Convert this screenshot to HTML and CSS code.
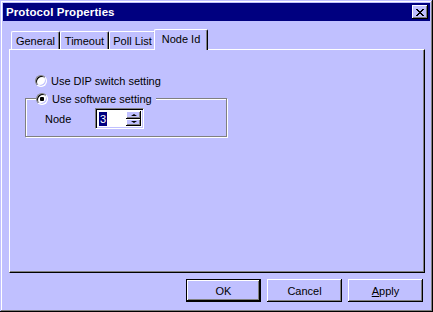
FILE: index.html
```html
<!DOCTYPE html>
<html lang="en">

<head>
  <meta charset="UTF-8">
  <title>Protocol Properties</title>
  <link rel="stylesheet" href="styles.css">
</head>

<body>
  <div class="window">
    <div class="titlebar">
      <span class="title">Protocol Properties</span>
      <button class="close" aria-label="Close">
        <svg width="8" height="7" viewBox="0 0 8 7">
          <path d="M0 0h2v1h1v1h2v-1h1v-1h2v1h-1v1h-1v1h-1v1h1v1h1v1h1v1h-2v-1h-1v-1h-2v1h-1v1h-2v-1h1v-1h1v-1h1v-1h-1v-1h-1v-1h-1z" fill="#000"/>
        </svg>
      </button>
    </div>

    <div class="body">
      <div class="tabs">
        <div class="tab tab-general">General</div>
        <div class="tab tab-timeout">Timeout</div>
        <div class="tab tab-poll">Poll List</div>
        <div class="tab active">Node Id</div>
      </div>

      <div class="panel">
        <label class="option">
          <span class="radio"></span>
          <span>Use DIP switch setting</span>
        </label>

        <fieldset class="group">
          <legend class="option">
            <span class="radio checked"></span>
            <span>Use software setting</span>
          </legend>
          <div class="node-row">
            <span class="node-label">Node</span>
            <div class="spin">
              <span class="spin-value"><span class="selected">3</span></span>
              <div class="spin-buttons">
                <span class="spin-btn"><i class="arrow up"></i></span>
                <span class="spin-btn"><i class="arrow down"></i></span>
              </div>
            </div>
          </div>
        </fieldset>
      </div>

      <div class="buttons">
        <button class="btn default">OK</button>
        <button class="btn">Cancel</button>
        <button class="btn"><u>A</u>pply</button>
      </div>
    </div>
  </div>
</body>

</html>
```

FILE: styles.css
```css
* {
  box-sizing: border-box;
}

:root {
  --face: #c0c0ff;
  --shadow: #808080;
  --light: #fff;
  --dark: #000;
  --navy: #000080;
}

body {
  margin: 0;
  font-family: 'Liberation Sans', Arial, sans-serif;
  font-size: 11px;
  color: #000;
}

.window {
  width: 433px;
  height: 312px;
  padding: 3px;
  background: var(--face);
  box-shadow: inset -1px -1px var(--dark), inset 1px 1px var(--face),
    inset -2px -2px var(--shadow), inset 2px 2px var(--light);
  display: flex;
  flex-direction: column;
}

.titlebar {
  height: 18px;
  background: var(--navy);
  display: flex;
  align-items: center;
  justify-content: space-between;
  padding: 0 2px 0 3px;
}

.title {
  color: #fff;
  font-weight: bold;
  font-size: 11.5px;
  letter-spacing: 0.1px;
}

.close {
  width: 16px;
  height: 14px;
  padding: 0;
  border: none;
  background: var(--face);
  box-shadow: inset -1px -1px var(--dark), inset 1px 1px var(--light),
    inset -2px -2px var(--shadow);
  display: flex;
  align-items: center;
  justify-content: center;
}

.body {
  padding: 8px 3px 0 6px;
  display: flex;
  flex-direction: column;
}

.tabs {
  display: flex;
  align-items: flex-end;
  height: 20px;
  padding-left: 2px;
}

.tab {
  height: 18px;
  line-height: 17px;
  text-align: center;
  border-top: 1px solid var(--light);
  border-left: 1px solid var(--light);
  border-right: 1px solid var(--dark);
  border-radius: 2px 2px 0 0;
  box-shadow: inset -1px 0 var(--shadow);
  padding-top: 1px;
}

.tab-general { width: 49px; }
.tab-timeout { width: 49px; }
.tab-poll { width: 47px; }

.tab.active {
  position: relative;
  z-index: 1;
  height: 21px;
  width: 54px;
  margin: 0 0 -1px -2px;
  background: var(--face);
  padding-top: 0;
  line-height: 18px;
}

.panel {
  width: 416px;
  height: 224px;
  border-top: 1px solid var(--light);
  border-left: 1px solid var(--light);
  border-right: 1px solid var(--dark);
  border-bottom: 1px solid var(--dark);
  box-shadow: inset -1px -1px var(--shadow);
  padding: 24px 0 0 25px;
}

.option {
  display: flex;
  align-items: center;
  gap: 4px;
  height: 13px;
}

.radio {
  width: 12px;
  height: 12px;
  border-radius: 50%;
  background: #fff;
  border: 1px solid;
  border-color: var(--shadow) var(--light) var(--light) var(--shadow);
  box-shadow: inset 1px 1px var(--dark), inset -1px -1px var(--face);
  display: flex;
  align-items: center;
  justify-content: center;
}

.radio.checked::after {
  content: "";
  width: 4px;
  height: 4px;
  border-radius: 1px;
  background: #000;
}

.group {
  margin: 5px 0 0 -10px;
  width: 202px;
  height: 45px;
  padding: 0 0 0 19px;
  border: 1px solid var(--shadow);
  box-shadow: 1px 1px var(--light), inset 1px 1px var(--light);
}

.group legend {
  padding: 0 4px 0 0;
  margin-left: -9px;
  background: var(--face);
}

.node-row {
  display: flex;
  align-items: center;
  margin-top: 3px;
}

.node-label {
  width: 50px;
}

.spin {
  width: 49px;
  height: 21px;
  background: #fff;
  border-top: 1px solid var(--shadow);
  border-left: 1px solid var(--shadow);
  border-right: 1px solid var(--light);
  border-bottom: 1px solid var(--light);
  box-shadow: inset 1px 1px var(--dark), inset -1px -1px var(--face);
  display: flex;
  padding: 2px;
}

.spin-value {
  flex: 1;
  display: flex;
  align-items: center;
  padding-left: 1px;
}

.selected {
  background: var(--navy);
  color: #fff;
  line-height: 14px;
  padding: 0 1px;
}

.spin-buttons {
  width: 15px;
  display: flex;
  flex-direction: column;
}

.spin-btn {
  flex: 1;
  background: var(--face);
  box-shadow: inset -1px -1px var(--dark), inset 1px 1px var(--light),
    inset -2px -2px var(--shadow);
  display: flex;
  align-items: center;
  justify-content: center;
}

.arrow {
  width: 0;
  height: 0;
  border-left: 3px solid transparent;
  border-right: 3px solid transparent;
}

.arrow.up {
  border-bottom: 2px solid #000;
}

.arrow.down {
  border-top: 2px solid #000;
}

.buttons {
  display: flex;
  justify-content: flex-end;
  gap: 6px;
  margin-top: 6px;
  padding-right: 4px;
}

.btn {
  width: 75px;
  height: 23px;
  padding: 0;
  border: none;
  background: var(--face);
  font-family: inherit;
  font-size: 11px;
  color: #000;
  box-shadow: inset -1px -1px var(--dark), inset 1px 1px var(--light),
    inset -2px -2px var(--shadow);
}

.btn.default {
  border: 1px solid var(--dark);
}
```
